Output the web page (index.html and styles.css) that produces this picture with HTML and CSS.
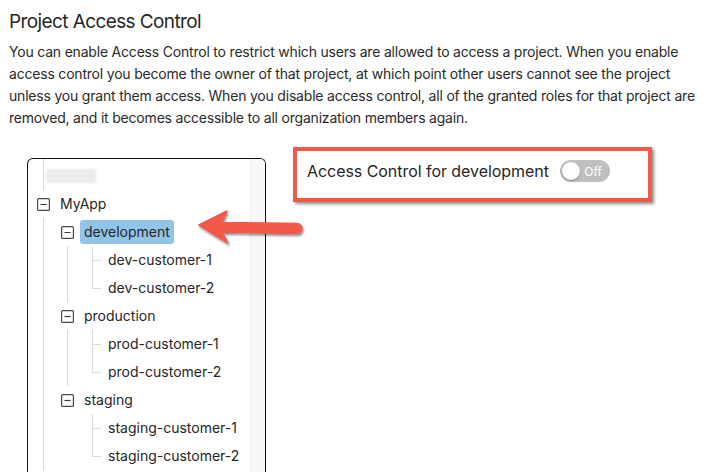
FILE: index.html
```html
<!DOCTYPE html>
<html lang="en">
<head>
<meta charset="utf-8">
<title>Project Access Control</title>
<link rel="stylesheet" href="styles.css">
</head>
<body>
<main class="page">
  <h1 class="title">Project Access Control</h1>
  <p class="intro">You can enable Access Control to restrict which users are allowed to access a project. When you enable access control you become the owner of that project, at which point other users cannot see the project unless you grant them access. When you disable access control, all of the granted roles for that project are removed, and it becomes accessible to all organization members again.</p>

  <div class="workspace">
    <div class="tree-panel">
      <div class="tree">
        <div class="node first">
          <span class="switcher stem"></span>
          <span class="redacted"></span>
        </div>
        <div class="node">
          <span class="switcher"><svg class="box-icon" viewBox="0 0 13 13"><rect x="0.6" y="0.6" width="11.8" height="11.8" rx="1"/><line x1="3.5" y1="6.5" x2="9.5" y2="6.5"/></svg></span>
          <span class="node-title">MyApp</span>
        </div>
        <div class="node">
          <span class="indent line"></span>
          <span class="switcher"><svg class="box-icon" viewBox="0 0 13 13"><rect x="0.6" y="0.6" width="11.8" height="11.8" rx="1"/><line x1="3.5" y1="6.5" x2="9.5" y2="6.5"/></svg></span>
          <span class="node-title selected">development</span>
        </div>
        <div class="node">
          <span class="indent line"></span>
          <span class="indent line"></span>
          <span class="switcher leaf"></span>
          <span class="node-title">dev-customer-1</span>
        </div>
        <div class="node">
          <span class="indent line"></span>
          <span class="indent line"></span>
          <span class="switcher leaf last"></span>
          <span class="node-title">dev-customer-2</span>
        </div>
        <div class="node">
          <span class="indent line"></span>
          <span class="switcher"><svg class="box-icon" viewBox="0 0 13 13"><rect x="0.6" y="0.6" width="11.8" height="11.8" rx="1"/><line x1="3.5" y1="6.5" x2="9.5" y2="6.5"/></svg></span>
          <span class="node-title">production</span>
        </div>
        <div class="node">
          <span class="indent line"></span>
          <span class="indent line"></span>
          <span class="switcher leaf"></span>
          <span class="node-title">prod-customer-1</span>
        </div>
        <div class="node">
          <span class="indent line"></span>
          <span class="indent line"></span>
          <span class="switcher leaf last"></span>
          <span class="node-title">prod-customer-2</span>
        </div>
        <div class="node">
          <span class="indent line"></span>
          <span class="switcher"><svg class="box-icon" viewBox="0 0 13 13"><rect x="0.6" y="0.6" width="11.8" height="11.8" rx="1"/><line x1="3.5" y1="6.5" x2="9.5" y2="6.5"/></svg></span>
          <span class="node-title">staging</span>
        </div>
        <div class="node">
          <span class="indent line"></span>
          <span class="indent"></span>
          <span class="switcher leaf"></span>
          <span class="node-title">staging-customer-1</span>
        </div>
        <div class="node">
          <span class="indent line"></span>
          <span class="indent"></span>
          <span class="switcher leaf last"></span>
          <span class="node-title">staging-customer-2</span>
        </div>
      </div>
      <div class="tree-gutter"></div>
    </div>

    <div class="ac-box">
      <span class="ac-label">Access Control for development</span>
      <span class="switch"><span class="knob"></span><span class="switch-text">Off</span></span>
    </div>

    <svg class="callout-arrow" viewBox="0 0 120 50" width="120" height="50">
      <defs>
        <filter id="arrowShadow" x="-20%" y="-30%" width="140%" height="170%">
          <feDropShadow dx="1" dy="2" stdDeviation="1.2" flood-color="#000" flood-opacity="0.45"/>
        </filter>
      </defs>
      <path d="M9,25 L37,11 L32,22.5 L107,23.5 A5,5 0 0 1 107,33.5 L32,32 L38,43 Z" fill="#f35849" stroke="#f35849" stroke-width="1.5" stroke-linejoin="round" filter="url(#arrowShadow)"/>
    </svg>
  </div>
</main>
</body>
</html>
```

FILE: styles.css
```css
html, body {
  margin: 0;
  padding: 0;
  background: #ffffff;
}

body {
  font-family: Inter, "Noto Sans", "Liberation Sans", sans-serif;
  color: #262626;
}

.page {
  padding: 0 4px 0 9px;
}

.title {
  margin: 0;
  padding-top: 10px;
  font-size: 19px;
  line-height: 24px;
  font-weight: 400;
  letter-spacing: -0.6px;
  color: #262626;
}

.intro {
  margin: 7px 0 0;
  font-size: 14px;
  line-height: 22px;
  letter-spacing: -0.2px;
  color: #2a2a2a;
}

.workspace {
  position: relative;
  display: flex;
  align-items: flex-start;
  margin-top: 18px;
}

/* tree panel */
.tree-panel {
  display: flex;
  margin-left: 18px;
  margin-top: 11px;
  width: 239px;
  height: 330px;
  box-sizing: border-box;
  border: 1px solid #111111;
  border-bottom: none;
  border-radius: 6px 6px 0 0;
  overflow: hidden;
  flex: none;
}

.tree {
  flex: 1;
  padding: 3px 0 0 4px;
}

.tree-gutter {
  width: 14px;
  background: #f8f8f8;
  border-left: 1px solid #ededed;
}

.node {
  display: flex;
  align-items: center;
  height: 28px;
}

.indent,
.switcher {
  flex: none;
  width: 24px;
  align-self: stretch;
  display: flex;
  align-items: center;
  justify-content: center;
}

.indent.line {
  background: linear-gradient(#dcdcdc, #dcdcdc) no-repeat 11px 0 / 1px 100%;
}

.switcher.stem {
  margin-top: -3px;
  background: linear-gradient(#dcdcdc, #dcdcdc) no-repeat 11px 0 / 1px 100%;
}

.switcher.leaf {
  background:
    linear-gradient(#dcdcdc, #dcdcdc) no-repeat 12px 0 / 1px 100%,
    linear-gradient(#dcdcdc, #dcdcdc) no-repeat 12px 14px / 9px 1px;
}

.switcher.leaf.last {
  background:
    linear-gradient(#dcdcdc, #dcdcdc) no-repeat 12px 0 / 1px 15px,
    linear-gradient(#dcdcdc, #dcdcdc) no-repeat 12px 14px / 9px 1px;
}

.box-icon {
  width: 13px;
  height: 13px;
  margin-left: -1px;
}

.box-icon rect {
  fill: #ffffff;
  stroke: #4a4a4a;
  stroke-width: 1.2;
}

.box-icon line {
  stroke: #3a3a3a;
  stroke-width: 1.2;
}

.node-title {
  padding: 0 4px;
  line-height: 24px;
  font-size: 14px;
  color: #262626;
  white-space: nowrap;
  border-radius: 3px;
}

.node-title.selected {
  background: #92c3e9;
}

.redacted {
  width: 50px;
  height: 14px;
  margin-left: -10px;
  background: #ececec;
  filter: blur(1.2px);
}

/* access control box */
.ac-box {
  display: flex;
  align-items: center;
  margin-left: 27px;
  width: 359px;
  height: 55px;
  box-sizing: border-box;
  padding: 9px 10px 16px;
  border: 4px solid #f35849;
  background: #ffffff;
  box-shadow: 2px 2px 3px rgba(0, 0, 0, 0.45);
}

.ac-label {
  font-size: 16px;
  line-height: 22px;
  letter-spacing: -0.05px;
  color: #262626;
  white-space: nowrap;
}

.switch {
  display: flex;
  align-items: center;
  margin-left: 11px;
  width: 50px;
  height: 22px;
  box-sizing: border-box;
  padding: 2px;
  border-radius: 11px;
  background: #bfbfbf;
}

.knob {
  width: 18px;
  height: 18px;
  border-radius: 50%;
  background: #ffffff;
  box-shadow: 0 1px 2px rgba(0, 0, 0, 0.3);
}

.switch-text {
  margin-left: auto;
  margin-right: 6px;
  font-size: 12px;
  color: #ffffff;
}

/* callout arrow overlay */
.callout-arrow {
  position: absolute;
  left: 181px;
  top: 53px;
  overflow: visible;
}
```
